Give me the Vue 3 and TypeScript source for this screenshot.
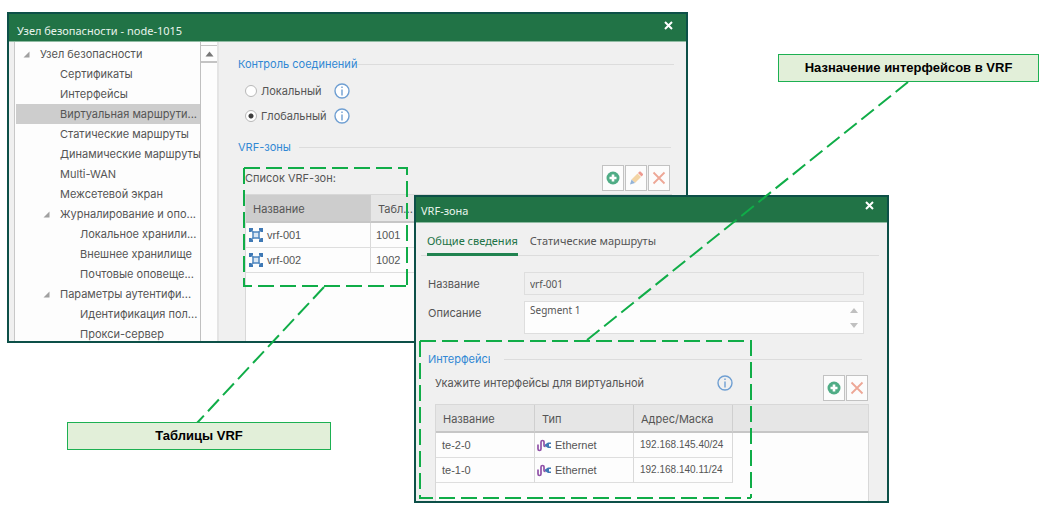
<script setup lang="ts">
import { ref } from 'vue'

interface TreeItem {
  label: string
  level: number
  open?: boolean
}

const tree: TreeItem[] = [
  { label: 'Узел безопасности', level: 0, open: true },
  { label: 'Сертификаты', level: 1 },
  { label: 'Интерфейсы', level: 1 },
  { label: 'Виртуальная маршрути...', level: 1 },
  { label: 'Статические маршруты', level: 1 },
  { label: 'Динамические маршруты', level: 1 },
  { label: 'Multi-WAN', level: 1 },
  { label: 'Межсетевой экран', level: 1 },
  { label: 'Журналирование и опо...', level: 1, open: true },
  { label: 'Локальное хранили...', level: 2 },
  { label: 'Внешнее хранилище', level: 2 },
  { label: 'Почтовые оповеще...', level: 2 },
  { label: 'Параметры аутентифи...', level: 1, open: true },
  { label: 'Идентификация пол...', level: 2 },
  { label: 'Прокси-сервер', level: 2 },
]
const selected = ref(3)

const modes = [
  { id: 'local', label: 'Локальный' },
  { id: 'global', label: 'Глобальный' },
]
const mode = ref('global')

const zones = [
  { name: 'vrf-001', table: '1001' },
  { name: 'vrf-002', table: '1002' },
]

const interfaces = [
  { name: 'te-2-0', type: 'Ethernet', address: '192.168.145.40/24' },
  { name: 'te-1-0', type: 'Ethernet', address: '192.168.140.11/24' },
]

const zoneName = ref('vrf-001')
const description = ref('Segment 1')
</script>

<template>
  <main class="desktop">
    <section class="window node-window" aria-label="Узел безопасности">
      <header class="titlebar">
        <h1>Узел безопасности - node-1015</h1>
        <button class="close" type="button" aria-label="Закрыть">
          <svg width="9" height="9" viewBox="0 0 9 9"><path d="M1 1l7 7M8 1l-7 7" /></svg>
        </button>
      </header>
      <div class="node-body">
        <nav class="sidebar">
          <ul class="tree">
            <li v-for="(item, i) in tree" :key="item.label">
              <button
                type="button"
                :class="['node', 'level-' + item.level, { selected: selected === i }]"
                @click="selected = i"
              >
                <svg class="twist" width="7" height="7" viewBox="0 0 7 7">
                  <path v-if="item.open" d="M6.500 .5v6h-6z" />
                </svg>
                <span>{{ item.label }}</span>
              </button>
            </li>
          </ul>
          <div class="scrollbar">
            <button type="button" aria-label="Вверх">
              <svg width="9" height="6" viewBox="0 0 9 6"><path d="M4.500 .5l4 5h-8z" /></svg>
            </button>
          </div>
        </nav>
        <div class="node-form">
          <h2 class="group"><span>Контроль соединений</span></h2>
          <div class="modes">
            <div v-for="m in modes" :key="m.id" class="mode">
              <input :id="m.id" v-model="mode" type="radio" name="mode" :value="m.id" />
              <label :for="m.id">{{ m.label }}</label>
              <svg class="info" width="16" height="16" viewBox="0 0 16 16">
                <circle cx="8" cy="8" r="7" /><path d="M8 6.500v6M8 3.500v1.500" />
              </svg>
            </div>
          </div>
          <h2 class="group zones-title"><span>VRF-зоны</span></h2>
          <div class="toolbar zones-bar">
            <span class="caption">Список VRF-зон:</span>
            <div class="tools">
              <button type="button" aria-label="Добавить">
                <svg width="14" height="14" viewBox="0 0 14 14">
                  <circle cx="7" cy="7" r="6.500" fill="#4fac85" />
                  <path d="M7 3.500v7M3.500 7h7" stroke="#fff" stroke-width="2.600" />
                </svg>
              </button>
              <button type="button" aria-label="Изменить">
                <svg width="14" height="14" viewBox="0 0 14 14">
                  <path d="M2.500 8.500l6-6 3.500 3.500-6 6z" fill="#f3d4a4" />
                  <path d="M2.500 8.500l3.500 3.500-5 1.500z" fill="#94b4d8" />
                  <path d="M9 2l1.500-1.500h1L14 3v1l-1.500 1.500z" fill="#ee9a90" />
                </svg>
              </button>
              <button type="button" aria-label="Удалить">
                <svg width="14" height="14" viewBox="0 0 14 14">
                  <path d="M1.500 1.500l11 11M12.500 1.500l-11 11" stroke="#eda796" stroke-width="1.800" />
                </svg>
              </button>
            </div>
          </div>
          <div class="grid-box">
            <table class="zones">
              <colgroup><col class="zone-name" /><col /></colgroup>
              <thead>
                <tr><th class="sorted">Название</th><th>Табл...</th></tr>
              </thead>
              <tbody>
                <tr v-for="z in zones" :key="z.name">
                  <td>
                    <span class="cell zone-cell">
                      <svg width="14" height="14" viewBox="0 0 14 14">
                        <path d="M2 2l10 10M12 2L2 12" stroke="#6a98c8" stroke-width="1.500" />
                        <rect x="4" y="4" width="6" height="6" fill="#dbe7f3" stroke="#4f86bf" stroke-width="1.500" />
                        <path
                          d="M0 0h4v2l-2 2H0zM10 0h4v4h-2l-2-2zM0 10h2l2 2v2H0zM12 10h2v4h-4v-2z"
                          fill="#3f79b5"
                        />
                      </svg>
                      {{ z.name }}
                    </span>
                  </td>
                  <td>{{ z.table }}</td>
                </tr>
              </tbody>
            </table>
          </div>
        </div>
      </div>
    </section>

    <section class="window zone-window" aria-label="VRF-зона">
      <header class="titlebar">
        <h1>VRF-зона</h1>
        <button class="close" type="button" aria-label="Закрыть">
          <svg width="9" height="9" viewBox="0 0 9 9"><path d="M1 1l7 7M8 1l-7 7" /></svg>
        </button>
      </header>
      <div class="zone-body">
        <div class="tabs" role="tablist">
          <button type="button" role="tab" class="tab active" aria-selected="true">Общие сведения</button>
          <button type="button" role="tab" class="tab" aria-selected="false">Статические маршруты</button>
        </div>
        <div class="fields">
          <label for="zone-name">Название</label>
          <input id="zone-name" v-model="zoneName" type="text" readonly />
          <label for="zone-description">Описание</label>
          <div class="area">
            <textarea id="zone-description" v-model="description" rows="1"></textarea>
            <svg width="8" height="22" viewBox="0 0 8 22">
              <path d="M4 1l4 5H0zM0 16h8l-4 5z" fill="#c0c0c0" />
            </svg>
          </div>
        </div>
        <h2 class="group interfaces-title"><span>Интерфейсы</span></h2>
        <div class="toolbar interfaces-bar">
          <span class="caption">Укажите интерфейсы для виртуальной</span>
          <svg class="info" width="16" height="16" viewBox="0 0 16 16">
            <circle cx="8" cy="8" r="7" /><path d="M8 6.500v6M8 3.500v1.500" />
          </svg>
          <div class="tools">
            <button type="button" aria-label="Добавить">
              <svg width="14" height="14" viewBox="0 0 14 14">
                <circle cx="7" cy="7" r="6.500" fill="#4fac85" />
                <path d="M7 3.500v7M3.500 7h7" stroke="#fff" stroke-width="2.600" />
              </svg>
            </button>
            <button type="button" aria-label="Удалить">
              <svg width="14" height="14" viewBox="0 0 14 14">
                <path d="M1.500 1.500l11 11M12.500 1.500l-11 11" stroke="#eda796" stroke-width="1.800" />
              </svg>
            </button>
          </div>
        </div>
        <div class="grid-box">
          <table class="interfaces">
            <colgroup><col class="if-col" /><col class="if-col" /><col class="if-col" /><col /></colgroup>
            <thead>
              <tr><th>Название</th><th>Тип</th><th>Адрес/Маска</th><th class="rest"></th></tr>
            </thead>
            <tbody>
              <tr v-for="row in interfaces" :key="row.name">
                <td>{{ row.name }}</td>
                <td>
                  <span class="cell link-type">
                    <svg width="14" height="13" viewBox="0 0 14 13">
                      <path
                        d="M1 5.500v4.500a1.500 1.500 0 0 0 3 0V3a1.500 1.500 0 0 1 3 0v3.500q0 1 1.500 1"
                        fill="none" stroke="#9152a8" stroke-width="1.700"
                      />
                      <path d="M14 3.500h-3l-3 2v1.500l3 2h3V7.500h-2V5h2z" fill="#3f79b5" />
                    </svg>
                    {{ row.type }}
                  </span>
                </td>
                <td class="address">{{ row.address }}</td>
                <td class="rest"></td>
              </tr>
            </tbody>
          </table>
        </div>
      </div>
    </section>

    <svg class="marks" width="1049" height="505" viewBox="0 0 1049 505" aria-hidden="true">
      <path d="M244 168H407V286" />
      <path d="M244 168V286H407" />
      <path d="M420 341H751V498" />
      <path d="M420 341V498H751" />
      <path d="M324 287L197 423" />
      <path d="M587 340L908 82" />
    </svg>
    <p class="callout callout-tables">Таблицы VRF</p>
    <p class="callout callout-interfaces">Назначение интерфейсов в VRF</p>
  </main>
</template>

<style>
body {
  margin: 0;
  background: #fff;
}
</style>

<style scoped>
.desktop {
  position: relative;
  min-height: 505px;
  overflow: hidden;
  background: #fff;
  color: #555;
  font: 11px/16px Inter, "Liberation Sans", sans-serif;
}
.desktop * {
  box-sizing: border-box;
}
button,
input,
textarea {
  margin: 0;
  padding: 0;
  border: 0;
  background: none;
  color: inherit;
  font: inherit;
}
h1,
h2,
p,
ul {
  margin: 0;
  padding: 0;
  font-size: 11px;
  font-weight: 400;
}
.window {
  position: absolute;
  display: flex;
  flex-direction: column;
  overflow: hidden;
  border: 2px solid #0d5048;
  background: #f0f0f0;
}
.node-window {
  left: 7px;
  top: 12px;
  width: 681px;
  height: 331px;
}
.zone-window {
  left: 414px;
  top: 195px;
  width: 475px;
  height: 308px;
}
.titlebar {
  display: flex;
  flex: none;
  align-items: center;
  height: 28px;
  padding: 6px 12px 0 8px;
  border-bottom: 1px solid #8fbba2;
  background: #217346;
  color: #e8f3ec;
  font-family: "Noto Sans", sans-serif;
}
.zone-window .titlebar {
  height: 26px;
  padding: 3px 12px 0 5px;
}
.titlebar h1 {
  flex: 1;
}
.close {
  display: flex;
  align-self: flex-start;
  padding: 1px;
}
.close svg {
  stroke: #fff;
  stroke-width: 2;
}
.node-body {
  display: flex;
  flex: 1;
  min-height: 0;
}
.sidebar {
  display: flex;
  flex: none;
  width: 205px;
  margin-left: 5px;
  overflow: hidden;
  border-left: 1px solid #c8c8c8;
  border-right: 2px solid #e4e4e4;
  background: #fdfdfd;
}
.tree {
  flex: 1;
  min-width: 0;
  padding: 2px 0 0 1px;
  list-style: none;
}
.node {
  display: flex;
  align-items: center;
  gap: 10px;
  width: 100%;
  height: 20px;
  white-space: nowrap;
}
.level-0 {
  padding-left: 7px;
}
.level-1 {
  padding-left: 27px;
}
.level-2 {
  padding-left: 47px;
}
.selected {
  background: #cdcdcd;
}
.twist {
  flex: none;
  fill: #a0a0a0;
}
.scrollbar {
  flex: none;
  width: 17px;
  padding-top: 3px;
  border-left: 1px solid #c0c0c0;
}
.scrollbar button {
  display: flex;
  align-items: center;
  justify-content: center;
  width: 16px;
  height: 18px;
  border: solid #c4c4c4;
  border-width: 1px 0 2px;
}
.scrollbar svg {
  fill: #777;
}
.node-form {
  display: flex;
  flex: 1;
  flex-direction: column;
  min-width: 0;
  padding: 14px 12px 0 19px;
}
.group {
  display: flex;
  align-items: center;
  color: #3088d4;
}
.group::after {
  content: "";
  flex: 1;
  height: 1px;
  background: #dcdcdc;
}
.modes {
  padding: 6px 0 0 7px;
}
.mode {
  display: flex;
  align-items: center;
  height: 25px;
}
.mode input {
  appearance: none;
  display: flex;
  width: 12px;
  height: 12px;
  border: 1px solid #b8b8b8;
  border-radius: 50%;
  background: #fff;
}
.mode input:checked {
  background: radial-gradient(circle, #3c3c3c 2px, #fff 3px);
}
.mode label {
  width: 73px;
  margin-left: 4px;
}
.info {
  fill: none;
  stroke: #6f9fd2;
  stroke-width: 1.4;
}
.mode .info {
  fill: #fff;
}
.zones-title {
  gap: 8px;
  margin: 11px 3px 0 0;
}
.toolbar {
  display: flex;
  align-items: center;
}
.zones-bar {
  margin: 10px 4px 0 7px;
}
.caption {
  white-space: nowrap;
}
.tools {
  display: flex;
  gap: 1px;
  margin-left: auto;
}
.tools button {
  display: flex;
  align-items: center;
  justify-content: center;
  width: 22px;
  height: 26px;
  border: 1px solid #c2c2c2;
  background: #fcfcfc;
}
.tools svg {
  fill: none;
}
.grid-box {
  flex: 1;
  min-height: 0;
  overflow: hidden;
  border: 1px solid #d8d8d8;
  border-bottom: 0;
  background: #fdfdfd;
}
.node-form .grid-box {
  margin: 3px 2px 0 7px;
}
table {
  width: 100%;
  border-spacing: 0;
  table-layout: fixed;
}
th {
  height: 28px;
  padding: 1px 7px 0;
  border-right: 1px solid #cfcfcf;
  border-bottom: 2px solid #c6c6c6;
  background: #e6e6e6;
  font-weight: 400;
  text-align: left;
  white-space: nowrap;
}
td {
  height: 25px;
  padding: 0 5px;
  border-right: 1px solid #d9d9d9;
  border-bottom: 1px solid #dedede;
  font-family: "Liberation Sans", Arial, sans-serif;
}
th.sorted {
  background: #cdcdcd;
}
.zone-name {
  width: 125px;
}
.if-col {
  width: 99px;
}
.interfaces td {
  padding: 0 6px;
}
td.address {
  font-size: 10px;
}
.rest {
  border-right: 0;
}
td.rest {
  border-bottom: 0;
}
.cell {
  display: flex;
  align-items: center;
  gap: 4px;
}
.zone-cell {
  margin-left: -2px;
}
.link-type {
  margin-left: -4px;
}
.zone-body {
  display: flex;
  flex: 1;
  flex-direction: column;
  min-height: 0;
  padding: 9px 18px 0 11px;
}
.tabs {
  display: flex;
  gap: 12px;
  margin: 0 -10px 0 -6px;
  padding-left: 6px;
  border-bottom: 1px solid #dcdcdc;
  font-family: "Noto Sans", sans-serif;
}
.tab {
  height: 24px;
  margin-bottom: -1px;
  padding-bottom: 4px;
  border-bottom: 3px solid transparent;
}
.active {
  border-color: #218350;
  color: #217346;
}
.fields {
  display: grid;
  grid-template-columns: 96px 1fr;
  row-gap: 6px;
  align-items: center;
  margin: 16px 5px 0 1px;
}
.fields input,
.area {
  border: 1px solid #dedede;
  font-family: "Noto Sans", sans-serif;
  font-size: 10px;
}
.fields input {
  width: 100%;
  height: 23px;
  padding: 0 5px;
}
.fields label[for="zone-description"] {
  align-self: start;
  margin-top: 4px;
}
.area {
  display: flex;
  align-items: center;
  height: 33px;
  padding: 0 5px;
  background: #fdfdfd;
}
.area textarea {
  flex: 1;
  height: 31px;
  resize: none;
}
.interfaces-title {
  gap: 14px;
  margin: 17px 7px 0 1px;
}
.interfaces-title span {
  width: 62px;
  overflow: hidden;
}
.interfaces-bar {
  align-items: flex-start;
  margin: 8px 1px 0 8px;
}
.interfaces-bar .caption {
  width: 282px;
}
.zone-body .grid-box {
  margin: 3px 0 0 8px;
}
.marks {
  position: absolute;
  left: 0;
  top: 0;
  fill: none;
  stroke: #10ad48;
  stroke-width: 2;
  stroke-dasharray: 16 6;
  pointer-events: none;
}
.callout {
  position: absolute;
  height: 28px;
  border: 1px solid #1db052;
  background: #e2efd9;
  color: #000;
  font: bold 13px/26px "Liberation Sans", Arial, sans-serif;
  text-align: center;
}
.callout-tables {
  left: 67px;
  top: 422px;
  width: 264px;
}
.callout-interfaces {
  left: 778px;
  top: 54px;
  width: 261px;
}
</style>
